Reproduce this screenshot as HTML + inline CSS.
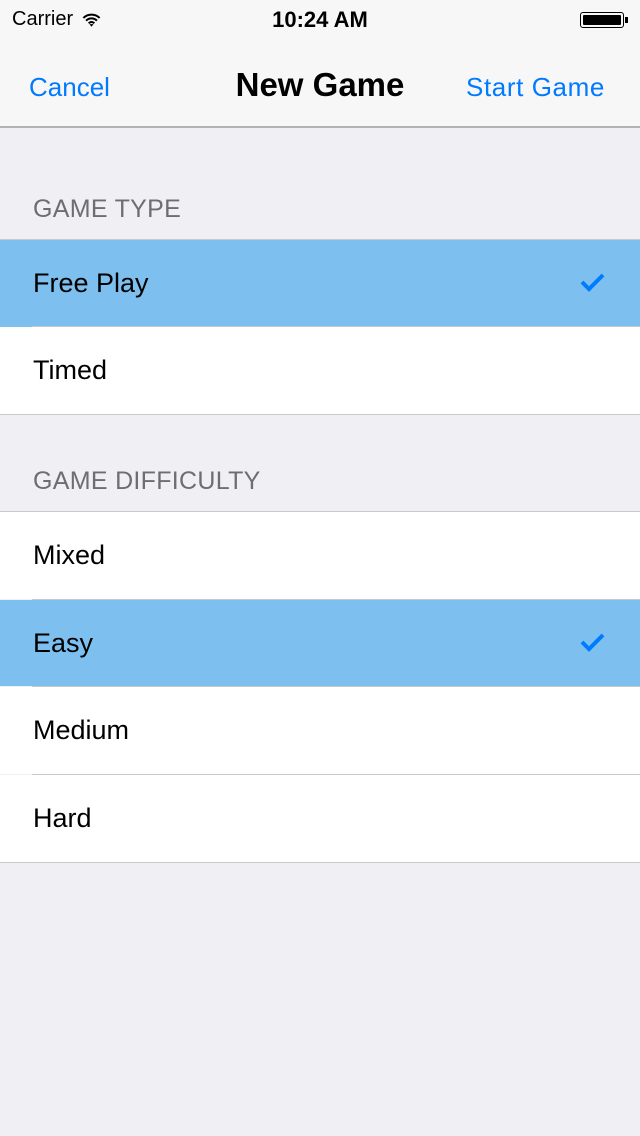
<!DOCTYPE html>
<html><head><style>
body{margin:0;width:640px;height:1136px;background:#efeff4;font-family:"Liberation Sans",sans-serif;position:relative;overflow:hidden}
.a{position:absolute}
.nav{left:0;top:0;width:640px;height:128px;background:#f7f7f7;border-bottom:2px solid #b2b2b2;box-sizing:border-box}
.row{position:absolute;left:0;width:640px;background:#fff;font-size:27px;color:#000}
.row span{position:absolute;left:33px;top:28px}
.sel{background:#7dbfee}
.sep{position:absolute;left:32px;right:0;height:1px;background:#c8c7cc}
.hdr{position:absolute;left:33px;font-size:25px;color:#6d6d72;letter-spacing:0.3px}
.chk{position:absolute;left:578px;top:30px}
</style></head><body>
<div class="a nav"></div>
<div class="a" style="left:12px;top:8px;font-size:20px">Carrier</div>
<svg class="a" style="left:82px;top:12px" width="19" height="16" viewBox="0 0 28 20"><path d="M2 7a17 17 0 0 1 24 0M6 11a11 11 0 0 1 16 0M10 15a5 5 0 0 1 8 0" stroke="#000" stroke-width="3" fill="none"/><path d="M11 16l3 4 3-4z" fill="#000"/></svg>
<div class="a" style="left:0;width:640px;text-align:center;top:7px;font-size:22px;font-weight:bold">10:24 AM</div>
<div class="a" style="left:580px;top:12px;width:44px;height:16px;border:1.5px solid #000;border-radius:3px;box-sizing:border-box;padding:2px"><div style="background:#000;height:100%;border-radius:1px"></div></div>
<div class="a" style="left:625px;top:17px;width:3px;height:6px;background:#000"></div>
<div class="a" style="left:29px;top:72px;font-size:26px;color:#007aff">Cancel</div>
<div class="a" style="left:0;width:640px;text-align:center;top:66px;font-size:33px;font-weight:bold">New Game</div>
<div class="a" style="left:466px;top:72px;font-size:26px;letter-spacing:0.6px;color:#007aff">Start Game</div>

<div class="hdr" style="top:195px">GAME TYPE</div>
<div class="a" style="left:0;top:239px;width:640px;height:1px;background:#c8c7cc"></div>
<div class="row sel" style="top:240px;height:87px"><span>Free Play</span>
<svg class="chk" width="30" height="24" viewBox="0 0 30 24"><path d="M4 12l7 7L25 5" stroke="#007aff" stroke-width="4" fill="none"/></svg></div>
<div class="row" style="top:327px;height:87px"><span>Timed</span></div>
<div class="sep" style="top:326px"></div>
<div class="a" style="left:0;top:414px;width:640px;height:1px;background:#c8c7cc"></div>

<div class="hdr" style="top:467px">GAME DIFFICULTY</div>
<div class="a" style="left:0;top:511px;width:640px;height:1px;background:#c8c7cc"></div>
<div class="row" style="top:512px;height:87px"><span>Mixed</span></div>
<div class="row sel" style="top:600px;height:86px"><span>Easy</span>
<svg class="chk" width="30" height="24" viewBox="0 0 30 24"><path d="M4 12l7 7L25 5" stroke="#007aff" stroke-width="4" fill="none"/></svg></div>
<div class="row" style="top:687px;height:87px"><span>Medium</span></div>
<div class="row" style="top:775px;height:87px"><span>Hard</span></div>
<div class="sep" style="top:599px"></div>
<div class="sep" style="top:686px"></div>
<div class="sep" style="top:774px"></div>
<div class="a" style="left:0;top:862px;width:640px;height:1px;background:#c8c7cc"></div>
</body></html>
